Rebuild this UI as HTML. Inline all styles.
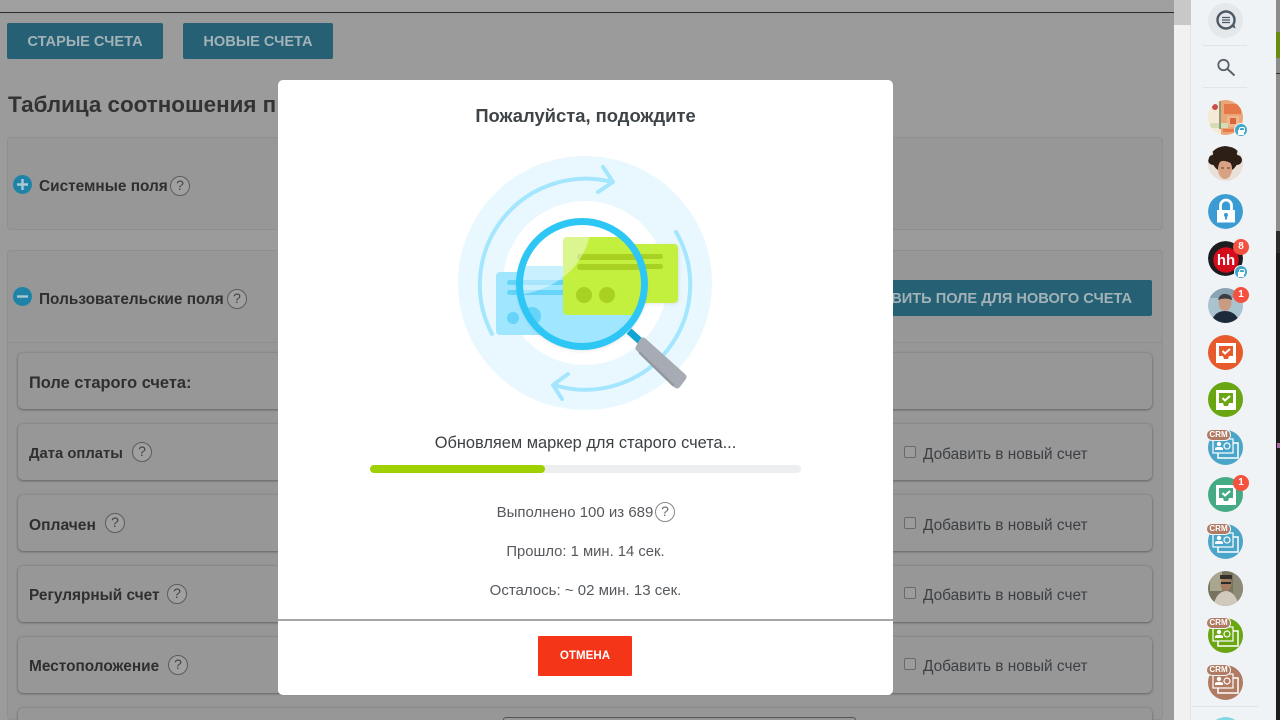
<!DOCTYPE html>
<html lang="ru"><head><meta charset="utf-8"><title>Пожалуйста, подождите</title>
<style>
*{box-sizing:border-box}
html,body{margin:0;padding:0;width:1280px;height:720px;overflow:hidden;background:#9b9b9b;font-family:"Liberation Sans",sans-serif}
body{position:relative}
#root{position:absolute;left:0;top:0;width:1280px;height:720px;overflow:hidden}
.a{position:absolute}
.btn{position:absolute;background:#256075;color:#a3b2b7;font-weight:bold;font-size:14.6px;border-radius:2px;text-align:center;line-height:38px;height:36px;white-space:nowrap;overflow:hidden}
.panel{position:absolute;left:7px;width:1156px;border:1px solid #8f8f8f;border-radius:4px;background:#979797}
.card{position:absolute;left:18px;width:1134px;height:56px;border-radius:5px;background:#979797;box-shadow:0 1px 2px rgba(70,70,70,.55),0 0 2px rgba(90,90,90,.4)}
.lb{position:absolute;font-weight:bold;color:#2f2f2f;white-space:nowrap;font-size:15.4px}
.q{position:absolute;width:20px;height:20px;border-radius:50%;border:1.5px solid #5c5c5c;background:#a0a0a0;color:#444;font-size:14px;line-height:17px;text-align:center}
.ck{position:absolute;left:904px;width:12px;height:12px;border:1.5px solid #6a6a6a;border-radius:2px;background:#9c9c9c}
.add{position:absolute;left:923px;font-size:15.4px;color:#3c3f43;white-space:nowrap}
.modal{position:absolute;left:278px;top:80px;width:615px;height:615px;background:#fff;border-radius:5px}
.t{position:absolute;left:0;width:615px;text-align:center;white-space:nowrap}
.av{position:absolute;left:1208px;width:35px;height:35px;border-radius:50%;overflow:hidden}
.badge{position:absolute;left:1233px;width:16px;height:16px;border-radius:50%;background:#f4513f;color:#fff;font-size:10px;font-weight:bold;text-align:center;line-height:16px}
.lock{position:absolute;left:1234px;width:14px;height:14px;border-radius:50%;background:#3fa7c9;border:1px solid #eff3f6}
.lock:after{content:"";position:absolute;left:3px;top:5.5px;width:6px;height:5px;background:#fff}
.lock:before{content:"";position:absolute;left:4px;top:2.500px;width:4px;height:4px;border:1px solid #fff;border-bottom:0;border-radius:2px 2px 0 0}
.crm{position:absolute;left:1206px;width:25px;height:12px;background:#b07a63;border-radius:6px;border:1px solid #f1f4f7;color:#fff;font-size:8px;font-weight:bold;text-align:center;line-height:10px}
</style></head><body><div id="root">

<div class="a" style="left:0;top:0;width:1174px;height:12px;background:#9f9f9f"></div>
<div class="a" style="left:0;top:12px;width:1174px;height:1px;background:#2c2c2c"></div>

<div class="btn" style="left:7px;top:23px;width:156px">СТАРЫЕ СЧЕТА</div>
<div class="btn" style="left:183px;top:23px;width:150px">НОВЫЕ СЧЕТА</div>
<div class="lb" style="left:8px;top:92px;font-size:22.4px;color:#333">Таблица соотношения п</div>

<div class="panel" style="top:137px;height:93px"></div>
<svg class="a" style="left:13px;top:175px" width="20" height="20"><circle cx="9.5" cy="9.5" r="9.5" fill="#1f83a8"/><path d="M4 9.5h11M9.5 4v11" stroke="#a9c9d6" stroke-width="2.4"/></svg>
<div class="lb" style="left:39px;top:178px">Системные поля</div>
<div class="q" style="left:170px;top:176px">?</div>

<div class="panel" style="top:250px;height:470px"></div>
<svg class="a" style="left:13px;top:287px" width="20" height="20"><circle cx="9.5" cy="9.5" r="9.5" fill="#1f83a8"/><path d="M4 9.5h11" stroke="#a9c9d6" stroke-width="2.4"/></svg>
<div class="lb" style="left:39px;top:291px">Пользовательские поля</div>
<div class="q" style="left:227px;top:289px">?</div>
<div class="a" style="left:8px;top:342px;width:1154px;height:1px;background:#8f8f8f"></div>
<div class="btn" style="left:880px;top:280px;width:272px;text-align:right;padding-right:20px">ВИТЬ ПОЛЕ ДЛЯ НОВОГО СЧЕТА</div>

<div class="card" style="top:353px"></div>
<div class="lb" style="left:29px;top:374px;font-size:16.4px">Поле старого счета:</div>

<div class="card" style="top:424px"></div>
<div class="lb" style="left:29px;top:446px;font-size:14.8px">Дата оплаты</div>
<div class="q" style="left:132px;top:442px">?</div>
<div class="ck" style="top:446px"></div><div class="add" style="top:446px">Добавить в новый счет</div>

<div class="card" style="top:495px"></div>
<div class="lb" style="left:29px;top:517px;font-size:15.6px">Оплачен</div>
<div class="q" style="left:105px;top:513px">?</div>
<div class="ck" style="top:517px"></div><div class="add" style="top:517px">Добавить в новый счет</div>

<div class="card" style="top:566px"></div>
<div class="lb" style="left:29px;top:587px">Регулярный счет</div>
<div class="q" style="left:167px;top:584px">?</div>
<div class="ck" style="top:587px"></div><div class="add" style="top:587px">Добавить в новый счет</div>

<div class="card" style="top:637px"></div>
<div class="lb" style="left:29px;top:658px">Местоположение</div>
<div class="q" style="left:168px;top:655px">?</div>
<div class="ck" style="top:658px"></div><div class="add" style="top:658px">Добавить в новый счет</div>

<div class="card" style="top:708px;height:12px;border-radius:5px 5px 0 0"></div>
<div class="a" style="left:503px;top:717px;width:353px;height:3px;border:1px solid #555;border-bottom:0;border-radius:3px 3px 0 0"></div>

<div class="modal">
  <div class="t" style="top:25px;font-size:18.4px;font-weight:bold;color:#3f4448">Пожалуйста, подождите</div>
  <div class="t" style="top:354px;font-size:16.4px;color:#3c4043">Обновляем маркер для старого счета...</div>
  <div class="a" style="left:92px;top:385px;width:431px;height:8px;border-radius:4px;background:#eceef0"></div>
  <div class="a" style="left:92px;top:385px;width:175px;height:8px;border-radius:4px;background:#9fd100"></div>
  <div class="t" style="top:424px;font-size:15px;color:#55595d;padding-right:21px">Выполнено 100 из 689</div>
  <div class="q" style="left:377px;top:422px;background:#fff;border-color:#888;color:#666">?</div>
  <div class="t" style="top:464px;font-size:14.8px;color:#55595d">Прошло: 1 мин. 14 сек.</div>
  <div class="t" style="top:502px;font-size:15px;color:#55595d">Осталось: ~ 02 мин. 13 сек.</div>
  <div class="a" style="left:0;top:539px;width:615px;height:2px;background:#a6a6a6"></div>
  <div class="a" style="left:260px;top:556px;width:94px;height:40px;background:#f43517;border-radius:1px;color:#fff;font-weight:bold;font-size:11.6px;text-align:center;line-height:39px">ОТМЕНА</div>
</div>

<svg class="a" style="left:440px;top:140px" width="290" height="280" viewBox="440 140 290 280">
  <defs>
    <clipPath id="lens"><circle cx="582" cy="284" r="62"/></clipPath>
    <filter id="sh" x="-20%" y="-20%" width="140%" height="140%"><feGaussianBlur stdDeviation="2.5"/></filter>
  </defs>
  <circle cx="585" cy="283" r="127" fill="#e8f8fe"/>
  <circle cx="585" cy="283" r="82" fill="#fff"/>
  <path d="M492 334A106 106 0 0 1 612 182" fill="none" stroke="#a5e6ff" stroke-width="4" stroke-linecap="round"/>
  <path d="M603 167L613 182L598 192" fill="none" stroke="#a5e6ff" stroke-width="4" stroke-linecap="round" stroke-linejoin="round"/>
  <path d="M676 232A105 105 0 0 1 554 385" fill="none" stroke="#a5e6ff" stroke-width="4" stroke-linecap="round"/>
  <path d="M568 374L553 385L562 399" fill="none" stroke="#a5e6ff" stroke-width="4" stroke-linecap="round" stroke-linejoin="round"/>
  <rect x="496" y="272" width="72" height="63" rx="4" fill="#a0e6ff"/>
  <rect x="507" y="280" width="60" height="5" rx="2.5" fill="#66d3f8"/>
  <rect x="507" y="290" width="60" height="5" rx="2.5" fill="#66d3f8"/>
  <circle cx="513" cy="318" r="6" fill="#66d3f8"/>
  <rect x="600" y="246" width="78" height="57" rx="4" fill="#9a9a9a" opacity=".35" filter="url(#sh)"/>
  <rect x="600" y="244" width="78" height="59" rx="4" fill="#c3f03f"/>
  <rect x="620" y="254" width="43" height="5" rx="2.5" fill="#a8d123"/>
  <rect x="620" y="264" width="43" height="5" rx="2.5" fill="#a8d123"/>
  <circle cx="582" cy="286" r="64" fill="#888" opacity=".3" filter="url(#sh)"/>
  <circle cx="582" cy="284" r="62" fill="#fff"/>
  <g clip-path="url(#lens)">
    <rect x="480" y="266" width="220" height="90" fill="#a0e6ff"/>
    <rect x="507" y="280" width="70" height="5" rx="2.5" fill="#66d3f8"/>
    <rect x="507" y="290" width="70" height="5" rx="2.5" fill="#66d3f8"/>
    <circle cx="532" cy="316" r="9" fill="#66d3f8"/>
    <rect x="563" y="237" width="90" height="78" rx="4" fill="#c3f03f"/>
    <rect x="577" y="254" width="90" height="6" rx="3" fill="#a8d123"/>
    <rect x="577" y="264" width="90" height="6" rx="3" fill="#a8d123"/>
    <circle cx="584" cy="295" r="8" fill="#a8d123"/>
    <circle cx="607" cy="295" r="8" fill="#a8d123"/>
    <path d="M510 220H592C590 262 560 292 510 296Z" fill="#fff" opacity=".42"/>
  </g>
  <path d="M629 331L640 341" stroke="#10a4d4" stroke-width="7"/>
  <path d="M643 341L683 377L677 385L639 348Z" fill="#a7abb3" stroke="#a7abb3" stroke-width="7" stroke-linejoin="round"/>
  <path d="M640 353L673 385" stroke="#93979f" stroke-width="2.500" stroke-linecap="round"/>
  <circle cx="582" cy="284" r="62.5" fill="none" stroke="#2ec7f5" stroke-width="7"/>
</svg>

<div class="a" style="left:1174px;top:0;width:17px;height:720px;background:#f1f1f1;border-right:1px solid #e2e6ea"></div>
<div class="a" style="left:1174px;top:0;width:17px;height:25px;background:#c8c8c8"></div>
<div class="a" style="left:1191px;top:0;width:85px;height:720px;background:#eff3f6"></div>
<div class="a" style="left:1276px;top:0;width:4px;height:231px;background:#8b8b8b"></div>
<div class="a" style="left:1276px;top:32px;width:4px;height:26px;background:#6b8a10"></div>
<div class="a" style="left:1276px;top:73px;width:4px;height:1px;background:#333"></div>
<div class="a" style="left:1276px;top:231px;width:4px;height:489px;background:#1c1c1c"></div>
<div class="a" style="left:1276px;top:231px;width:4px;height:22px;background:#2c2c2c"></div>
<div class="a" style="left:1277px;top:443px;width:3px;height:5px;background:#a868a8"></div>

<div class="a" style="left:1208px;top:3px;width:35px;height:35px;border-radius:50%;background:#e4e8eb"></div>
<svg class="a" style="left:1208px;top:3px" width="35" height="35"><circle cx="18" cy="17" r="8.5" fill="none" stroke="#4c5a66" stroke-width="2.4"/><path d="M14 14.500h8M14 17h8M14 19.500h8" stroke="#4c5a66" stroke-width="1.300"/><path d="M22 23l5.500 2.500-1.500-5.500" fill="#4c5a66"/></svg>
<div class="a" style="left:1203px;top:45px;width:44px;height:1px;background:#e0e4e7"></div>
<svg class="a" style="left:1214px;top:56px" width="24" height="22"><circle cx="9.5" cy="9" r="5.200" fill="none" stroke="#59636e" stroke-width="1.800"/><path d="M13.500 13l7 6.500" stroke="#59636e" stroke-width="2"/></svg>
<div class="a" style="left:1203px;top:87px;width:44px;height:1px;background:#e0e4e7"></div>

<svg class="av" style="top:100px" viewBox="0 0 35 35"><rect width="35" height="35" fill="#f4ead6"/><rect x="13" width="22" height="35" fill="#eba678"/><rect x="16" y="4" width="17" height="10" fill="#e5794a"/><rect x="19" y="16" width="12" height="11" fill="#efb78e"/><rect x="22" y="18" width="6" height="6" fill="#d9663a"/><rect x="2" y="23" width="18" height="5" fill="#d5dcb4"/><rect x="15" y="29" width="18" height="3" fill="#e5794a"/><circle cx="7" cy="7" r="3" fill="#c9504a"/><rect x="11" y="1" width="2" height="28" fill="#8e9a78"/></svg>
<div class="lock" style="top:123px"></div>

<svg class="av" style="top:146px" viewBox="0 0 35 35"><rect width="35" height="35" fill="#e9e0d8"/><circle cx="17" cy="13" r="13" fill="#2e1f16"/><circle cx="5" cy="14" r="5" fill="#2e1f16"/><circle cx="29" cy="14" r="5" fill="#2e1f16"/><circle cx="9" cy="5" r="4.500" fill="#2e1f16"/><circle cx="25" cy="5" r="4.500" fill="#2e1f16"/><ellipse cx="17" cy="23" rx="7" ry="10" fill="#d8a184"/><path d="M9 19Q12 14 17 15T25 19L25 11H9Z" fill="#2e1f16"/><path d="M13 22h3M19 22h3" stroke="#5a3a2a" stroke-width="1"/></svg>

<svg class="av" style="top:194px" viewBox="0 0 35 35"><circle cx="17.500" cy="17.500" r="17.500" fill="#3b9bd3"/><rect x="9" y="16" width="18" height="12.500" fill="#fff"/><path d="M12.500 16v-4.500a5.500 5.500 0 0 1 11 0V16" fill="none" stroke="#fff" stroke-width="2.800"/><circle cx="18" cy="21" r="2.100" fill="#3b9bd3"/><rect x="17" y="21" width="2" height="4.500" fill="#3b9bd3"/></svg>

<svg class="av" style="top:241px" viewBox="0 0 35 35"><circle cx="17.500" cy="17.500" r="17.500" fill="#1d1d1f"/><circle cx="18" cy="19" r="12.700" fill="#d40c1c"/><text x="18" y="24" font-family="Liberation Sans" font-weight="bold" font-size="15" text-anchor="middle" fill="#fff">hh</text></svg>
<div class="badge" style="top:239px">8</div>
<div class="lock" style="top:265px"></div>

<svg class="av" style="top:288px" viewBox="0 0 35 35"><rect width="35" height="35" fill="#a9c3cf"/><rect y="0" width="35" height="10" fill="#8aa4b4"/><path d="M3 35Q6 23 17 23T32 35Z" fill="#1d2a3c"/><ellipse cx="17" cy="15" rx="6.500" ry="8" fill="#c99b82"/><path d="M10 12Q12 5 18 6T24 12Q17 9 10 12Z" fill="#3a3d42"/></svg>
<div class="badge" style="top:287px">1</div>

<div class="av" style="top:335px;background:#e65a2c"></div>
<svg class="a" style="left:1216px;top:343px" width="20" height="20"><path d="M0 0h20v20H0z" fill="#fff"/><path d="M3 3h14v10h-4l-1 3H8l-1-3H3z" fill="#e65a2c"/><path d="M6.500 8l2.500 2.500L14 6" fill="none" stroke="#fff" stroke-width="2"/></svg>

<div class="av" style="top:382px;background:#6aa512"></div>
<svg class="a" style="left:1216px;top:390px" width="20" height="20"><path d="M0 0h20v20H0z" fill="#fff"/><path d="M3 3h14v10h-4l-1 3H8l-1-3H3z" fill="#6aa512"/><path d="M6.500 8l2.500 2.500L14 6" fill="none" stroke="#fff" stroke-width="2"/></svg>

<div class="av" style="top:430px;background:#4aa5c9"></div>
<svg class="a" style="left:1212px;top:438px" width="27" height="22"><rect x="6" y="5" width="20" height="15" fill="#4aa5c9" stroke="#fff" stroke-width="1.500"/><rect x="1" y="1" width="20" height="14" fill="#4aa5c9" stroke="#fff" stroke-width="1.200"/><circle cx="7" cy="6" r="2.200" fill="#fff"/><path d="M3 12v-1.500q0-1.500 4-1.500t4 1.500V12z" fill="#fff"/><circle cx="15" cy="8" r="3" fill="none" stroke="#fff" stroke-width="1.200"/></svg>
<div class="crm" style="top:429px">CRM</div>

<div class="av" style="top:477px;background:#45ab84"></div>
<svg class="a" style="left:1216px;top:485px" width="20" height="20"><path d="M0 0h20v20H0z" fill="#fff"/><path d="M3 3h14v10h-4l-1 3H8l-1-3H3z" fill="#45ab84"/><path d="M6.500 8l2.500 2.500L14 6" fill="none" stroke="#fff" stroke-width="2"/></svg>
<div class="badge" style="top:475px">1</div>

<div class="av" style="top:524px;background:#4aa5c9"></div>
<svg class="a" style="left:1212px;top:532px" width="27" height="22"><rect x="6" y="5" width="20" height="15" fill="#4aa5c9" stroke="#fff" stroke-width="1.500"/><rect x="1" y="1" width="20" height="14" fill="#4aa5c9" stroke="#fff" stroke-width="1.200"/><circle cx="7" cy="6" r="2.200" fill="#fff"/><path d="M3 12v-1.500q0-1.500 4-1.500t4 1.500V12z" fill="#fff"/><circle cx="15" cy="8" r="3" fill="none" stroke="#fff" stroke-width="1.200"/></svg>
<div class="crm" style="top:523px">CRM</div>

<svg class="av" style="top:571px" viewBox="0 0 35 35"><rect width="35" height="35" fill="#77735f"/><rect x="2" width="12" height="20" fill="#a9a68f"/><rect x="25" width="10" height="35" fill="#8e8a78"/><path d="M5 35Q9 20 18 20T31 35Z" fill="#cfcabb"/><ellipse cx="18" cy="13" rx="5.500" ry="7" fill="#a47c62"/><rect x="12" y="4" width="12" height="4" fill="#33302a"/><rect x="13" y="11" width="10" height="2" fill="#2a2a2a"/></svg>

<div class="av" style="top:618px;background:#6aa512"></div>
<svg class="a" style="left:1212px;top:626px" width="27" height="22"><rect x="6" y="5" width="20" height="15" fill="#6aa512" stroke="#fff" stroke-width="1.500"/><rect x="1" y="1" width="20" height="14" fill="#6aa512" stroke="#fff" stroke-width="1.200"/><circle cx="7" cy="6" r="2.200" fill="#fff"/><path d="M3 12v-1.500q0-1.500 4-1.500t4 1.500V12z" fill="#fff"/><circle cx="15" cy="8" r="3" fill="none" stroke="#fff" stroke-width="1.200"/></svg>
<div class="crm" style="top:617px">CRM</div>

<div class="av" style="top:665px;background:#b07a63"></div>
<svg class="a" style="left:1212px;top:673px" width="27" height="22"><rect x="6" y="5" width="20" height="15" fill="#b07a63" stroke="#fff" stroke-width="1.500"/><rect x="1" y="1" width="20" height="14" fill="#b07a63" stroke="#fff" stroke-width="1.200"/><circle cx="7" cy="6" r="2.200" fill="#fff"/><path d="M3 12v-1.500q0-1.500 4-1.500t4 1.500V12z" fill="#fff"/><circle cx="15" cy="8" r="3" fill="none" stroke="#fff" stroke-width="1.200"/></svg>
<div class="crm" style="top:664px">CRM</div>

<div class="a" style="left:1192px;top:706px;width:66px;height:1px;background:#e0e4e7"></div>
<svg class="a" style="left:1208px;top:717px" width="35" height="3"><circle cx="17.500" cy="17.500" r="17.500" fill="#7fd8e4"/></svg>
</div></body></html>
